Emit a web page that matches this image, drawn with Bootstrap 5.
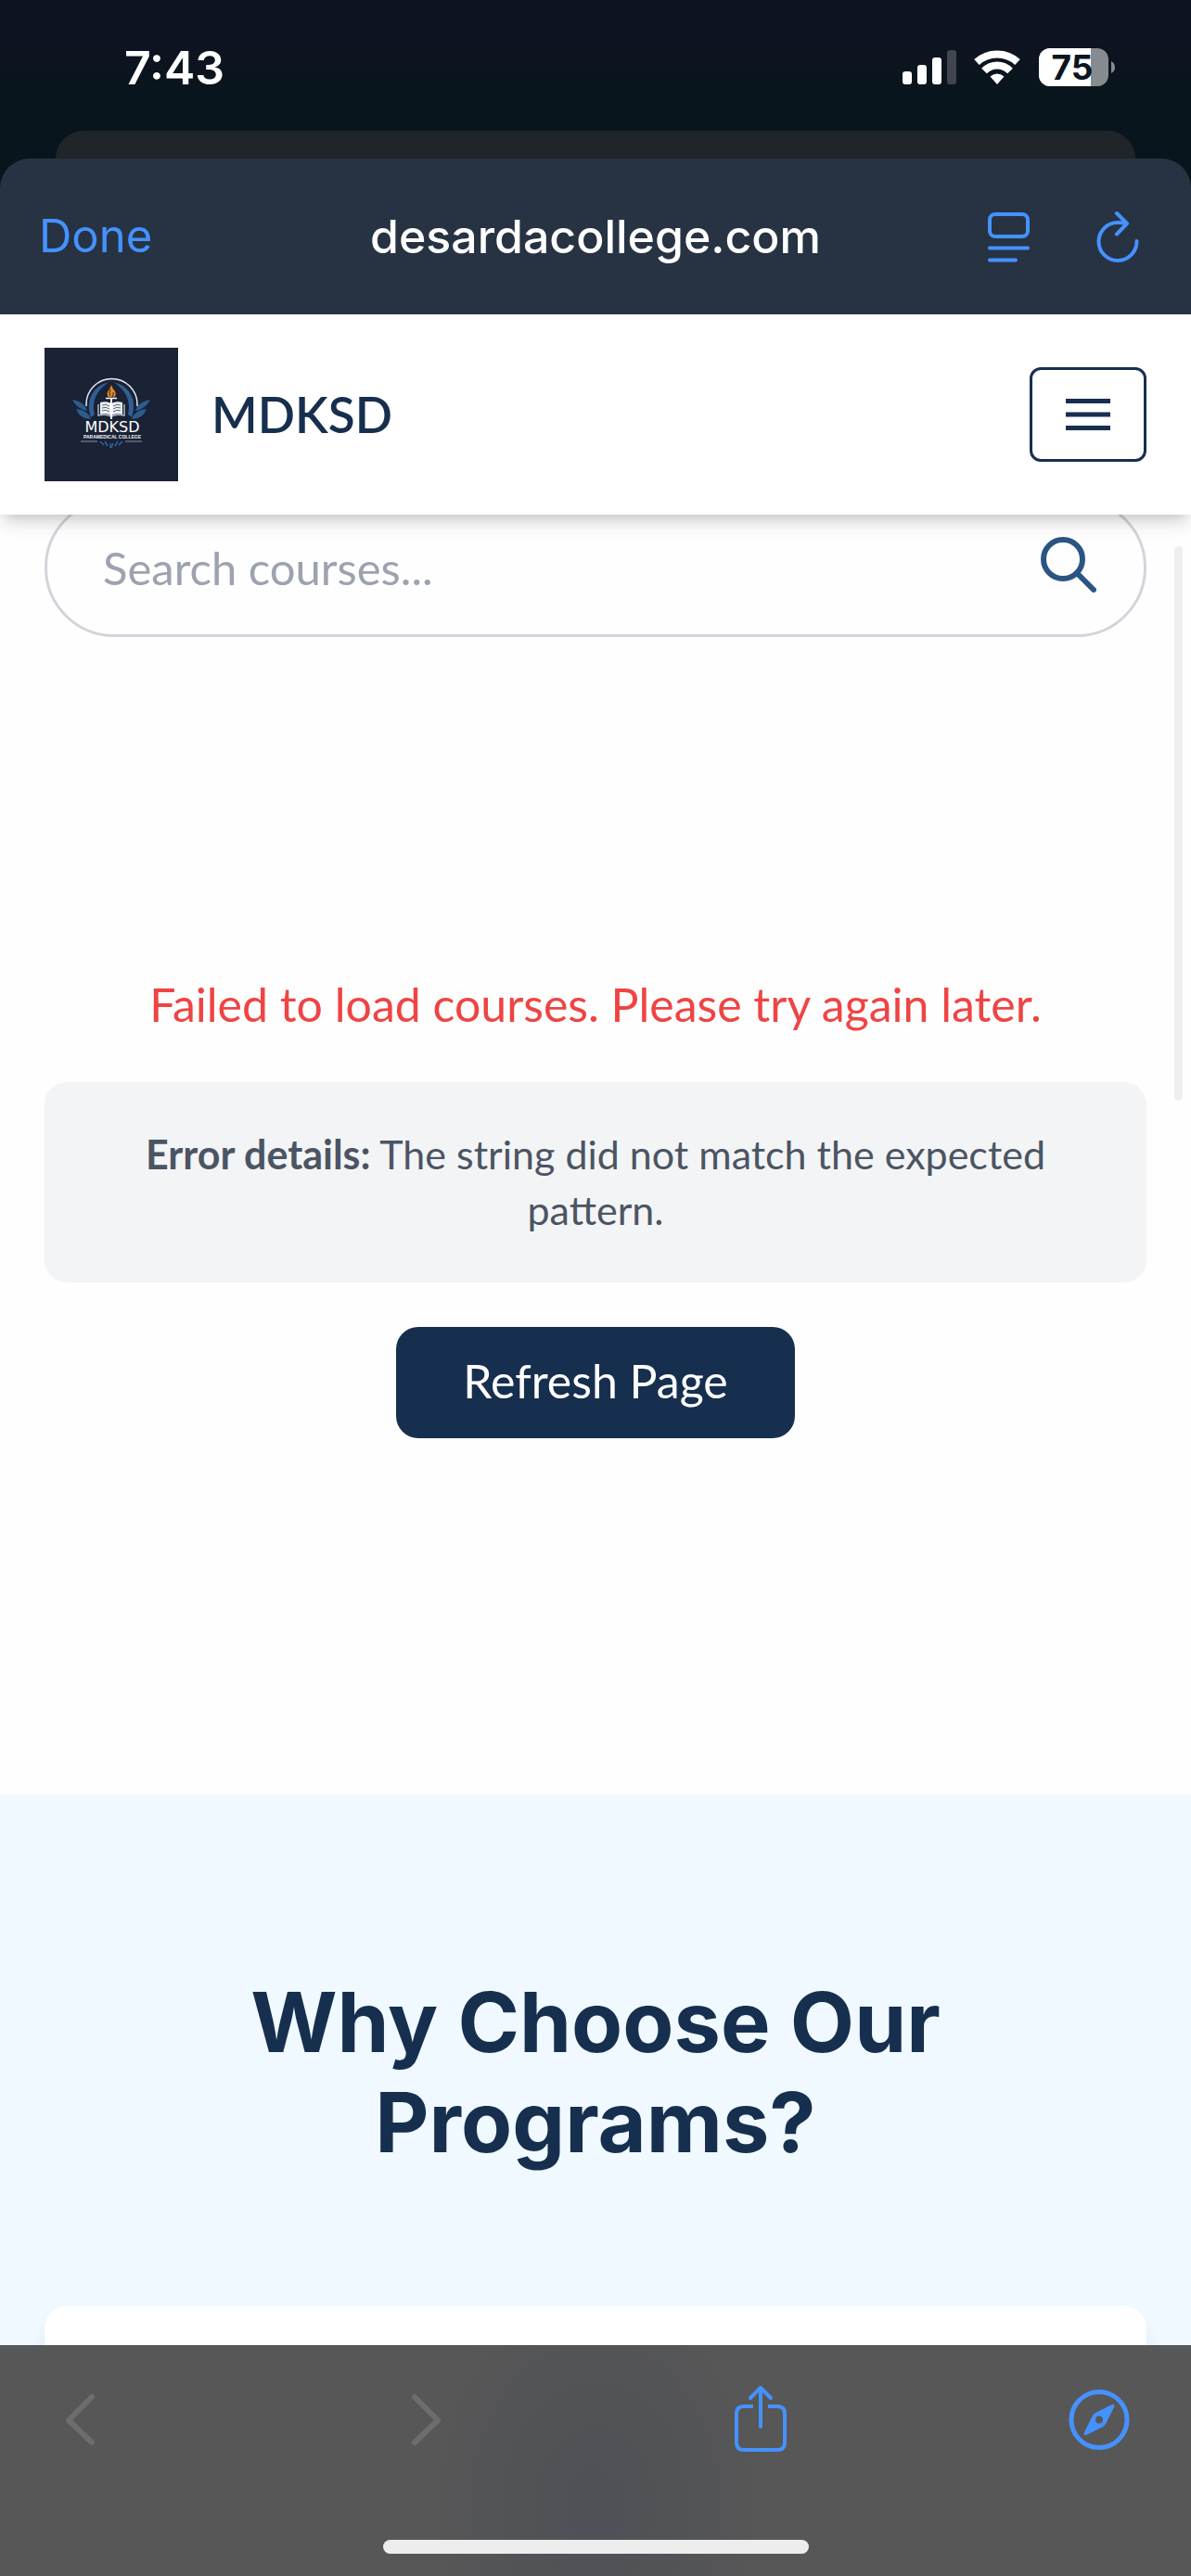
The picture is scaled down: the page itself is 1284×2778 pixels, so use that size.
<!DOCTYPE html>
<html lang="en">
<head>
<meta charset="utf-8">
<meta name="viewport" content="width=device-width, initial-scale=1">
<title>MDKSD Paramedical College</title>
<link href="https://cdn.jsdelivr.net/npm/bootstrap@5.3.0/dist/css/bootstrap.min.css" rel="stylesheet">
<style>
  :root { --navy: #172f4f; --ios-blue: #4592ff; --ui: Inter, "Liberation Sans", sans-serif; --copy: Lato, "Open Sans", sans-serif; }
  body { font-family: var(--copy); font-size: 50px; line-height: 72px; background: #fefefe; }
  svg { display: block; flex: none; }
  button { border: 0; background: none; padding: 0; }

  .phone-top { font-family: var(--ui); background: linear-gradient(#0e1322 0, #0d1420 60px, #09151c 100px, #09151c 171px); }
  .status-line { height: 141px; padding: 0 81px 0 134px; }
  .clock { font-size: 50px; line-height: 60px; font-weight: 600; padding-top: 43px; }
  .status-icons { padding-top: 48px; gap: 18px; }
  .sheet-behind { height: 30px; margin: 0 60px; background: #1f2528; border-radius: 30px 30px 0 0; }
  .browser-bar { height: 168px; padding: 0 42px; background: #273343; border-radius: 32px 32px 0 0; }
  .bar-side { flex: 1 1 200px; }
  .bar-done { font-size: 49px; line-height: 60px; color: var(--ios-blue); }
  .bar-host { font-size: 50px; line-height: 60px; font-weight: 500; color: #fff; }
  .bar-icons { gap: 66px; padding-right: 12px; }

  .site-nav { height: 216px; padding: 0 48px; background: #fff; z-index: 2;
    box-shadow: 0 12px 18px -3px rgba(0,0,0,.14), 0 6px 12px -6px rgba(0,0,0,.14); }
  .site-name { font-size: 53px; line-height: 72px; font-weight: 600; color: var(--navy); gap: 36px; }
  .menu-btn { width: 126px; height: 102px; border: 3px solid var(--navy); border-radius: 12px; }

  .search-wrap { margin: -18px 48px 0; height: 150px; padding: 0 51px 0 60px; border: 3px solid #d1d5db; border-radius: 75px; background: #fefefe; }
  .search-wrap input { border: 0; outline: 0; padding: 0; background: none; font-size: 49px; line-height: 72px; color: #374151; min-width: 0; }
  .search-wrap input::placeholder { color: #9ca3af; opacity: 1; }

  .load-error { padding: 360px 48px 384px; gap: 48px; }
  .error-text { color: #ef4444; }
  .error-box { padding: 48px; border-radius: 24px; background: #f3f4f6; color: #4b5563; font-size: 43px; line-height: 60px; }
  .refresh-btn { height: 120px; padding: 0 72px 4px; border-radius: 24px; background: var(--navy); color: #fff; }

  .why-us { padding: 192px 48px; background: #f0f9ff; }
  .why-title { font-family: var(--ui); font-size: 90px; line-height: 108px; font-weight: 700; color: var(--navy); margin-bottom: 144px; }
  .program-card { height: 400px; border-radius: 24px; background: #fff; box-shadow: 0 12px 18px -3px rgba(0,0,0,.1); }
  .scroll-thumb { position: absolute; top: 34px; right: 9px; width: 9px; height: 598px; border-radius: 5px; background: #efefef; }

  .tool-bar { height: 249px; z-index: 3; background: radial-gradient(ellipse 190px 260px at 50% 70%, #4e5056, #575757) #575757; }
  .tool-row { padding: 41px 66px 0 54px; }
  .home-bar { width: 459px; height: 15px; border-radius: 8px; background: #ededed; margin: 0 auto 24px; }
</style>
</head>
<body>
<div class="vh-100 d-flex flex-column overflow-hidden">
  <header class="phone-top flex-shrink-0">
    <div class="status-line d-flex justify-content-between align-items-start text-white">
      <span class="clock">7:43</span>
      <div class="status-icons d-flex">
        <svg width="60" height="48" viewBox="0 0 60 48" fill="#fff" aria-label="Signal">
          <rect x="2" y="29" width="10" height="14" rx="3"/><rect x="18" y="22" width="10" height="21" rx="3"/>
          <rect x="34" y="14" width="10" height="29" rx="3"/><rect x="50" y="6" width="10" height="37" rx="3" fill="#41464e"/>
        </svg>
        <svg width="52" height="48" viewBox="0 0 52 48" aria-label="Wi-Fi">
          <g fill="none" stroke="#fff" stroke-width="8">
            <path d="M4 19C16 7.500 36 7.500 48 19"/><path d="M12 28.500C20 20.500 32 20.500 40 28.500"/>
          </g>
          <path d="M18.500 34.500Q26 28.500 33.500 34.500L26 43Z" fill="#fff"/>
        </svg>
        <svg width="84" height="48" viewBox="0 0 84 48" aria-label="Battery 75%">
          <rect x="1" y="4" width="75" height="41" rx="12" fill="#868b90"/>
          <path d="M13 4H57V45H13A12 12 0 0 1 1 33V16A12 12 0 0 1 13 4Z" fill="#fff"/>
          <path d="M79 18Q83 20 83 24.500T79 31Z" fill="#868b90"/>
          <text x="37" y="38" text-anchor="middle" font-family="Inter, sans-serif" font-size="37" font-weight="700" fill="#0c1520">75</text>
        </svg>
      </div>
    </div>
    <div class="sheet-behind"></div>
    <div class="browser-bar d-flex align-items-center">
      <div class="bar-side d-flex"><button type="button" class="bar-done">Done</button></div>
      <div class="bar-host">desardacollege.com</div>
      <div class="bar-side bar-icons d-flex justify-content-end">
        <button type="button" aria-label="Reader view">
          <svg width="50" height="60" viewBox="0 0 50 60" fill="none" stroke="#4592ff" stroke-width="4" stroke-linecap="round">
            <rect x="3" y="6" width="41" height="24" rx="6"/><path d="M3 42.500H44M3 55.500H31"/>
          </svg>
        </button>
        <button type="button" aria-label="Reload">
          <svg width="50" height="60" viewBox="0 0 50 60" fill="none" stroke="#4592ff" stroke-width="4" stroke-linecap="round" stroke-linejoin="round">
            <path d="M45.500 35A20.500 20.500 0 1 1 25 15Q30 15 35 16M24 5L35 16L24 27.500"/>
          </svg>
        </button>
      </div>
    </div>
  </header>

  <nav class="site-nav position-relative flex-shrink-0 d-flex align-items-center justify-content-between">
    <a href="#" class="site-name d-flex align-items-center text-decoration-none">
      <svg width="144" height="144" viewBox="0 0 144 144" role="img" aria-label="College logo">
        <rect width="144" height="144" fill="#1a2235"/>
        <path d="M45 63V61A27 27 0 0 1 100 61V63" fill="none" stroke="#e9eef4" stroke-width="1.500"/>
        <path d="M50 75C44 58 51 41 70 37C58 44 50 56 54 72Z" fill="#315f93"/>
        <path d="M94 75C100 58 93 41 74 37C86 44 94 56 90 72Z" fill="#315f93"/>
        <path d="M30 56Q43 58 46 68Q35 66 30 56ZM34 66Q47 67 50 77Q38 77 34 66Z" fill="#2c5b8e"/>
        <path d="M114 56Q101 58 98 68Q109 66 114 56ZM110 66Q97 67 94 77Q106 77 110 66Z" fill="#2c5b8e"/>
        <path d="M72 40Q73 44 76 47Q78 51 75 53H69Q66 50 69 46Q71 44 72 40Z" fill="#e88a1c"/>
        <path d="M71 45Q69 49 71 52M74 48Q75 50 73 53" stroke="#1a2235" fill="none"/>
        <path d="M66 54.500H78" stroke="#fff" stroke-width="1.500"/>
        <path d="M60 59Q67 57 72 60Q77 57 84 59V72Q77 70 72 73Q67 70 60 72Z" fill="#eef1f4"/>
        <path d="M58 61V73Q66 71 72 74Q78 71 86 73V61" fill="none" stroke="#aeb6c2" stroke-width="1.500"/>
        <path d="M62 62Q66 60 70 63M62 65Q66 63 70 66M62 68Q66 66 70 69M74 63Q78 60 82 62M74 66Q78 63 82 65M74 69Q78 66 82 68" fill="none" stroke="#5d6878"/>
        <path d="M72 55V77" stroke="#fff" stroke-width="2"/>
        <text x="73" y="91" text-anchor="middle" font-family="DejaVu Sans, sans-serif" font-size="16" font-weight="400" fill="#fff">MDKSD</text>
        <text x="73" y="98" text-anchor="middle" font-family="Liberation Sans Narrow, Liberation Sans, sans-serif" font-size="5" font-weight="700" fill="#f0f3f6">PARAMEDICAL COLLEGE</text>
        <path d="M39 101H57M87 101H105" stroke="#8a93a3" stroke-width="1.200"/>
        <path d="M60 101L64 105M65 101L68 106M71 103V108M74 103L72 108M79 101L76 106M84 101L80 105" stroke="#2f629b" stroke-width="1.500"/>
      </svg>
      <span>MDKSD</span>
    </a>
    <button type="button" class="menu-btn d-flex align-items-center justify-content-center" aria-label="Menu">
      <svg width="48" height="36" viewBox="0 0 48 36" stroke="#172f4f" stroke-width="5"><path d="M0 3.500H48M0 18H48M0 32.500H48"/></svg>
    </button>
  </nav>

  <main class="position-relative flex-grow-1 overflow-hidden">
    <form class="search-wrap d-flex align-items-center">
      <input type="text" class="flex-grow-1" placeholder="Search courses..." aria-label="Search courses">
      <button type="button" aria-label="Search">
        <svg width="60" height="66" viewBox="0 0 60 66" fill="none" stroke="#2b5482" stroke-width="6" stroke-linecap="round"><circle cx="24" cy="24" r="21"/><path d="M39 39L57 57"/></svg>
      </button>
    </form>
    <section class="load-error d-flex flex-column align-items-center text-center">
      <p class="error-text m-0">Failed to load courses. Please try again later.</p>
      <div class="error-box align-self-stretch"><strong>Error details:</strong> The string did not match the expected pattern.</div>
      <button type="button" class="refresh-btn">Refresh Page</button>
    </section>
    <section class="why-us">
      <h2 class="why-title text-center">Why Choose Our<br>Programs?</h2>
      <div class="program-card"></div>
    </section>
    <div class="scroll-thumb"></div>
  </main>

  <footer class="tool-bar flex-shrink-0 d-flex flex-column justify-content-between">
    <div class="tool-row d-flex align-items-center justify-content-between">
      <button type="button" aria-label="Back"><svg width="66" height="78" viewBox="0 0 66 78" fill="none" stroke="#6d6d6d" stroke-width="6" stroke-linecap="round" stroke-linejoin="round"><path d="M45 15L20 40L45 64"/></svg></button>
      <button type="button" aria-label="Forward"><svg width="66" height="78" viewBox="0 0 66 78" fill="none" stroke="#6d6d6d" stroke-width="6" stroke-linecap="round" stroke-linejoin="round"><path d="M27 15L52 40L27 64"/></svg></button>
      <button type="button" aria-label="Share"><svg width="66" height="78" viewBox="-4 0 66 78" fill="none" stroke="#4592ff" stroke-width="4" stroke-linecap="round" stroke-linejoin="round"><path d="M22 25H12Q4 25 4 33V64Q4 72 12 72H48Q56 72 56 64V33Q56 25 48 25H38" stroke-linecap="butt"/><path d="M30 47V5M19 16L30 5L41 16"/></svg></button>
      <button type="button" aria-label="Open in browser"><svg width="66" height="78" viewBox="0 0 66 78"><circle cx="33" cy="39.500" r="30" fill="none" stroke="#4592ff" stroke-width="5"/><path fill="#4592ff" fill-rule="evenodd" d="M47 23Q50 22 49.500 25L40 44Q39 46 37 47L19 56Q16 57 17 53L26 35Q27 33 29 32ZM33 35.500A4 4 0 1 0 33 43.500A4 4 0 1 0 33 35.500Z"/></svg></button>
    </div>
    <div class="home-bar"></div>
  </footer>
</div>
<script src="https://cdn.jsdelivr.net/npm/bootstrap@5.3.0/dist/js/bootstrap.bundle.min.js"></script>
</body>
</html>
